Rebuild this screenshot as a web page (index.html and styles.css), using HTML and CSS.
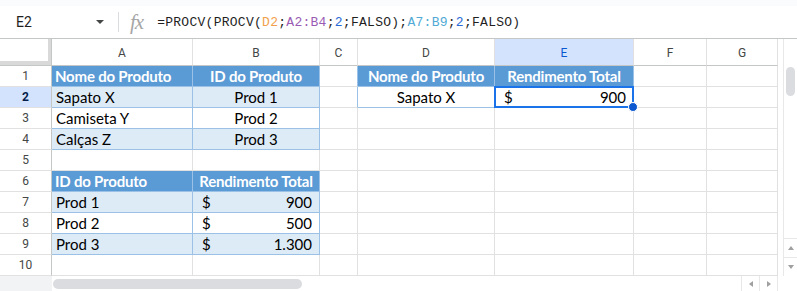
FILE: index.html
```html
<!DOCTYPE html>
<html lang="pt">
<head>
    <meta charset="UTF-8">
    <title>PROCV</title>
    <link rel="stylesheet" href="styles.css">
</head>
<body>
    <div class="topbar"></div>
    <div class="formula-bar">
        <div class="name-box">
            <span class="cell-ref">E2</span>
            <span class="caret"></span>
        </div>
        <div class="divider"></div>
        <span class="fx">fx</span>
        <div class="formula">=PROCV(PROCV(<span class="r1">D2</span>;<span class="r2">A2:B4</span>;<span class="num">2</span>;FALSO);<span class="r3">A7:B9</span>;<span class="num">2</span>;FALSO)</div>
    </div>

    <div class="sheet">
        <div class="grid">
            <div class="corner"></div>
            <div class="hd">A</div>
            <div class="hd">B</div>
            <div class="hd">C</div>
            <div class="hd">D</div>
            <div class="hd active">E</div>
            <div class="hd">F</div>
            <div class="hd">G</div>

            <div class="rh">1</div>
            <div class="c th">Nome do Produto</div>
            <div class="c th center">ID do Produto</div>
            <div class="c edge"></div>
            <div class="c th center">Nome do Produto</div>
            <div class="c th center">Rendimento Total</div>
            <div class="c"></div>
            <div class="c"></div>

            <div class="rh active">2</div>
            <div class="c band">Sapato X</div>
            <div class="c band center">Prod 1</div>
            <div class="c edge"></div>
            <div class="c tb center">Sapato X</div>
            <div class="c tb money selected"><span>$</span><span>900</span></div>
            <div class="c"></div>
            <div class="c"></div>

            <div class="rh">3</div>
            <div class="c tb">Camiseta Y</div>
            <div class="c tb center">Prod 2</div>
            <div class="c"></div>
            <div class="c"></div>
            <div class="c"></div>
            <div class="c"></div>
            <div class="c"></div>

            <div class="rh">4</div>
            <div class="c band">Calças Z</div>
            <div class="c band center">Prod 3</div>
            <div class="c"></div>
            <div class="c"></div>
            <div class="c"></div>
            <div class="c"></div>
            <div class="c"></div>

            <div class="rh">5</div>
            <div class="c"></div>
            <div class="c"></div>
            <div class="c"></div>
            <div class="c"></div>
            <div class="c"></div>
            <div class="c"></div>
            <div class="c"></div>

            <div class="rh">6</div>
            <div class="c th">ID do Produto</div>
            <div class="c th center">Rendimento Total</div>
            <div class="c"></div>
            <div class="c"></div>
            <div class="c"></div>
            <div class="c"></div>
            <div class="c"></div>

            <div class="rh">7</div>
            <div class="c band">Prod 1</div>
            <div class="c band money"><span>$</span><span>900</span></div>
            <div class="c"></div>
            <div class="c"></div>
            <div class="c"></div>
            <div class="c"></div>
            <div class="c"></div>

            <div class="rh">8</div>
            <div class="c tb">Prod 2</div>
            <div class="c tb money"><span>$</span><span>500</span></div>
            <div class="c"></div>
            <div class="c"></div>
            <div class="c"></div>
            <div class="c"></div>
            <div class="c"></div>

            <div class="rh">9</div>
            <div class="c band">Prod 3</div>
            <div class="c band money"><span>$</span><span>1.300</span></div>
            <div class="c"></div>
            <div class="c"></div>
            <div class="c"></div>
            <div class="c"></div>
            <div class="c"></div>

            <div class="rh">10</div>
            <div class="c"></div>
            <div class="c"></div>
            <div class="c"></div>
            <div class="c"></div>
            <div class="c"></div>
            <div class="c"></div>
            <div class="c"></div>
        </div>

        <div class="vscroll">
            <div class="vtrack">
                <div class="vthumb"></div>
                <div class="vspace"></div>
                <div class="vbtn"><span class="tri up"></span></div>
                <div class="vbtn"><span class="tri down"></span></div>
            </div>
        </div>
    </div>

    <div class="hscroll">
        <div class="hs-corner"></div>
        <div class="htrack"><div class="hthumb"></div></div>
        <div class="hbtn"><span class="tri left"></span></div>
        <div class="hbtn"><span class="tri right"></span></div>
        <div class="hs-end"></div>
    </div>
</body>
</html>
```

FILE: styles.css
```css
body {
    margin: 0;
    font-family: Roboto, "Liberation Sans", sans-serif;
    background-color: white;
    color: #1f1f1f;
    width: 797px;
    overflow: hidden;
}
.topbar {
    height: 6px;
    background-color: #f9fbfd;
}
.formula-bar {
    height: 33px;
    box-sizing: border-box;
    border-bottom: 1px solid #c4c7c5;
    display: flex;
    align-items: center;
}
.name-box {
    width: 118px;
    display: flex;
    align-items: center;
    justify-content: space-between;
    padding: 0 14px 0 16px;
    box-sizing: border-box;
}
.cell-ref {
    font-size: 14px;
}
.caret {
    width: 0;
    height: 0;
    border-left: 4px solid transparent;
    border-right: 4px solid transparent;
    border-top: 4px solid #444746;
}
.divider {
    width: 1px;
    height: 20px;
    background-color: #dadce0;
}
.fx {
    font-family: "Liberation Serif", serif;
    font-style: italic;
    font-size: 21px;
    color: #a6a6a6;
    margin: 0 14px 0 11px;
    letter-spacing: -1px;
}
.formula {
    font-family: "Liberation Mono", monospace;
    font-size: 13px;
    letter-spacing: 0.27px;
    color: #1f1f1f;
}
.r1 { color: #f29f4c; }
.r2 { color: #9a5bb4; }
.r3 { color: #51a9d6; }
.num { color: #2b6bd8; }

.sheet {
    display: flex;
}
.grid {
    display: grid;
    grid-template-columns: 52px 141px 127px 38px 137px 139px 73px 71px;
    grid-template-rows: 27px repeat(10, 21px);
}
.corner, .hd, .rh, .c {
    box-sizing: border-box;
    border-right: 1px solid #e1e1e1;
    border-bottom: 1px solid #e1e1e1;
}
.corner {
    border-right: 1px solid #c4c7c5;
    border-bottom: 1px solid #c4c7c5;
    box-shadow: inset -3px -4px 0 #d9d9d9;
}
.hd {
    border-bottom-color: #c4c7c5;
    display: flex;
    align-items: center;
    justify-content: center;
    font-size: 12px;
    color: #444746;
    padding-top: 2px;
}
.rh {
    border-right-color: #c4c7c5;
    display: flex;
    align-items: center;
    justify-content: center;
    font-size: 12px;
    color: #444746;
}
.hd.active, .rh.active {
    background-color: #d3e3fd;
    color: #0b57d0;
}
.rh.active {
    font-weight: bold;
    color: #041e49;
}
.c {
    font-family: Lato, "Open Sans", sans-serif;
    font-size: 15px;
    color: #000;
    display: flex;
    align-items: center;
    padding: 0 4px;
    white-space: nowrap;
    overflow: hidden;
}
.center {
    justify-content: center;
}
.th {
    background-color: #5b9bd5;
    color: white;
    font-weight: bold;
    border-color: #9bc2e6;
    padding: 0 3px;
    letter-spacing: -0.2px;
}
.band {
    background-color: #ddebf7;
    border-color: #9bc2e6;
}
.tb {
    border-color: #9bc2e6;
}
.edge {
    border-right-color: #9bc2e6;
}
.money {
    justify-content: space-between;
    padding: 0 7px 0 9px;
}
.selected {
    position: relative;
    overflow: visible;
}
.selected::after {
    content: "";
    position: absolute;
    left: -1px;
    top: -1px;
    right: -1px;
    bottom: -1px;
    border: 2px solid #1a73e8;
}
.selected::before {
    content: "";
    position: absolute;
    right: -5px;
    bottom: -5px;
    width: 8px;
    height: 8px;
    border-radius: 50%;
    background-color: #0b57d0;
    border: 1px solid white;
    z-index: 1;
}

.vscroll {
    width: 19px;
    display: flex;
}
.vtrack {
    flex: 1;
    margin-left: 5px;
    border-left: 1px solid #e8e8e8;
    display: flex;
    flex-direction: column;
    padding-top: 28px;
}
.vthumb {
    width: 9px;
    height: 29px;
    margin-left: 2px;
    border-radius: 5px;
    background-color: #dadce0;
}
.vspace {
    flex: 1;
}
.vbtn {
    height: 18px;
    border-top: 1px solid #e8e8e8;
    display: flex;
    align-items: center;
    justify-content: center;
}
.tri {
    width: 0;
    height: 0;
    border: 3px solid transparent;
}
.tri.up { border-bottom: 4px solid #a0a0a0; border-top: 0; }
.tri.down { border-top: 4px solid #a0a0a0; border-bottom: 0; }
.tri.left { border-right: 4px solid #a0a0a0; border-left: 0; }
.tri.right { border-left: 4px solid #a0a0a0; border-right: 0; }

.hscroll {
    height: 15px;
    display: flex;
}
.hs-corner {
    width: 52px;
    background-color: #f1f3f4;
}
.htrack {
    flex: 1;
    padding: 3px 0 0 1px;
}
.hthumb {
    width: 249px;
    height: 10px;
    border-radius: 5px;
    background-color: #dadce0;
}
.hbtn {
    width: 17px;
    border-left: 1px solid #e8e8e8;
    display: flex;
    align-items: center;
    justify-content: center;
}
.hs-end {
    width: 19px;
    border-left: 1px solid #e8e8e8;
}
```
